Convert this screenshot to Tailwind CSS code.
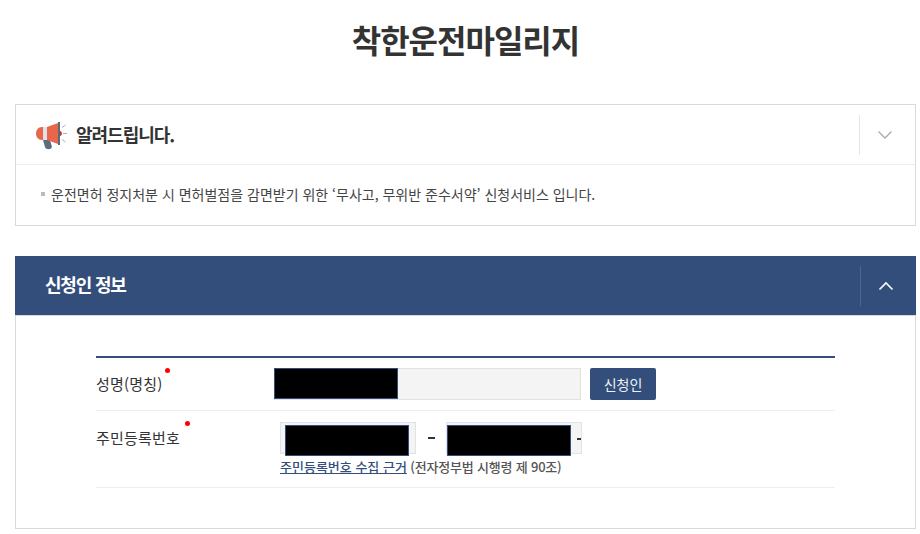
<!DOCTYPE html>
<html lang="ko">
<head>
    <meta charset="UTF-8">
    <title>착한운전마일리지</title>
    <script src="https://cdn.jsdelivr.net/npm/@tailwindcss/browser@4"></script>
</head>
<body class="bg-white font-['Noto_Sans_CJK_KR','Noto_Sans',sans-serif] text-[#333] overflow-hidden">
    <div class="w-[920px] h-[534px] pl-[15px] pr-[4px]">
        <h1 class="h-[104px] pt-[14px] text-center text-[32px] leading-[50px] font-bold tracking-[-1px] text-[#333]">착한운전마일리지</h1>

        <section class="border border-[#d9d9d9] h-[122px]">
            <div class="flex items-center h-[60px] border-b border-[#eee]">
                <div class="flex items-center flex-1 pl-[20px] -mt-[2px]">
                    <svg width="36" height="32" viewBox="0 0 36 32">
                        <path d="M7 22 H14 L16 29 C15 32 10 32 9 29Z" fill="#5b6b7c"/>
                        <path d="M7 9 V22 H6 C2 22 0 19 0 15.500 C0 12 2 9 6 9Z" fill="#e8674a"/>
                        <rect x="7" y="9" width="4" height="13" fill="#dfe3e8"/>
                        <path d="M11 9 L22 5 V26 L11 22Z" fill="#e8674a"/>
                        <path d="M22 4 H24 V27 H22Z" fill="#5b6b7c"/>
                        <path d="M24 13 C26.500 13 26.500 18 24 18Z" fill="#c0392b"/>
                        <path d="M27 15.500 H31 M26 9.500 L29.500 7 M26 21.500 L29.500 24" stroke="#aab4be" stroke-width="1" fill="none"/>
                    </svg>
                    <span class="ml-[4px] text-[18px] leading-[28px] font-bold tracking-[-1px] text-[#333]">알려드립니다.</span>
                </div>
                <div class="w-[56px] h-[40px] border-l border-[#e5e5e5] flex items-center justify-center pr-[6px]">
                    <svg width="16" height="10" viewBox="0 0 16 10" fill="none"><path d="M1.5 1.5 L8 8 L14.500 1.500" stroke="#a9a9a9" stroke-width="1.300"/></svg>
                </div>
            </div>
            <div class="flex items-center pl-[25px] pt-[19px] text-[14px] leading-[20px] text-[#444]">
                <span class="w-[4px] h-[4px] bg-[#bbb] mr-[6px]"></span>
                <p>운전면허 정지처분 시 면허벌점을 감면받기 위한 ‘무사고, 무위반 준수서약’ 신청서비스 입니다.</p>
            </div>
        </section>

        <section class="mt-[30px] h-[273px] border-x border-b border-[#d9d9d9]">
            <div class="flex items-center h-[60px] -mx-px bg-[#334e7a] border-b border-[#d9d9d9]">
                <h2 class="flex-1 pl-[30px] -mt-[2px] text-[18px] font-bold tracking-[-1.200px] text-white">신청인 정보</h2>
                <div class="w-[56px] h-[40px] border-l border-[#4d6690] flex items-center justify-center pr-[6px]">
                    <svg width="16" height="10" viewBox="0 0 16 10" fill="none"><path d="M1.5 8.500 L8 2 L14.500 8.500" stroke="#fff" stroke-width="1.600"/></svg>
                </div>
            </div>

            <div class="mx-[80px] mt-[40px] border-t-2 border-[#334e7a] text-[15px] tracking-[0.2px] text-[#333]">
                <div class="flex h-[53px] border-b border-[#eee]">
                    <div class="w-[178px] pt-[14px] leading-[24px] relative">
                        성명(명칭)
                        <span class="absolute left-[69px] top-[10px] w-[5px] h-[5px] rounded-full bg-[#f00]"></span>
                    </div>
                    <div class="flex pt-[10px]">
                        <div class="w-[307px] h-[32px] bg-[#f4f4f4] border border-[#e2e2e2]">
                            <div class="w-[124px] h-[31px] -mt-px -ml-px bg-black border border-[#334e7a]"></div>
                        </div>
                        <button class="ml-[9px] w-[66px] h-[32px] bg-[#334e7a] rounded-[2px] text-[14px] tracking-normal text-[#eef1f6]">신청인</button>
                    </div>
                </div>
                <div class="flex h-[77px] border-b border-[#eee]">
                    <div class="w-[184px] pt-[15px] leading-[24px] relative">
                        주민등록번호
                        <span class="absolute left-[89px] top-[10px] w-[5px] h-[5px] rounded-full bg-[#f00]"></span>
                    </div>
                    <div class="pt-[10px]">
                        <div class="flex items-center h-[33px]">
                            <div class="w-[136px] h-[32px] bg-[#f4f4f4] border border-[#e2e2e2] pl-[4px] pt-[2px]">
                                <div class="w-[124px] h-[31px] bg-black border border-[#334e7a]"></div>
                            </div>
                            <span class="w-[30px] flex justify-center"><span class="w-[7px] h-[2px] bg-[#333]"></span></span>
                            <div class="relative w-[136px] h-[32px] bg-[#f4f4f4] border border-[#e2e2e2] pt-[2px]">
                                <div class="w-[124px] h-[31px] bg-black border border-[#334e7a]"></div>
                                <span class="absolute left-[130px] top-[15px] w-[4px] h-[2px] bg-[#333]"></span>
                            </div>
                        </div>
                        <p class="text-[13px] leading-[16px] mt-[5px] tracking-[-0.2px] font-medium text-[#555]"><a class="text-[#334e7a] underline tracking-normal">주민등록번호 수집 근거</a> (전자정부법 시행령 제 90조)</p>
                    </div>
                </div>
            </div>
        </section>
    </div>
</body>
</html>
